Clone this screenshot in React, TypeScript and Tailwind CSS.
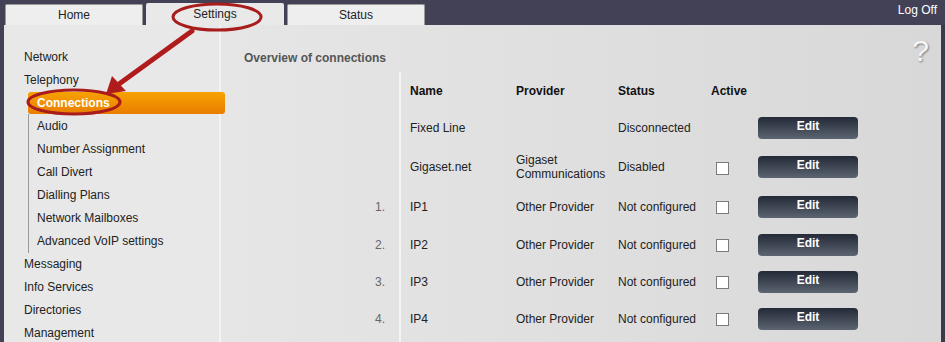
import React from "react";

const menuTop = ["Network", "Telephony"];
const subItems = [
  "Audio",
  "Number Assignment",
  "Call Divert",
  "Dialling Plans",
  "Network Mailboxes",
  "Advanced VoIP settings",
];
const menuBottom = ["Messaging", "Info Services", "Directories", "Management"];

type Row = { num: string; name: string; provider: string[]; status: string; box: boolean; h: string };

const rows: Row[] = [
  { num: "", name: "Fixed Line", provider: [], status: "Disconnected", box: false, h: "h-[38px]" },
  { num: "", name: "Gigaset.net", provider: ["Gigaset", "Communications"], status: "Disabled", box: true, h: "h-[40px]" },
  { num: "1.", name: "IP1", provider: ["Other Provider"], status: "Not configured", box: true, h: "h-[39px]" },
  { num: "2.", name: "IP2", provider: ["Other Provider"], status: "Not configured", box: true, h: "h-[37px]" },
  { num: "3.", name: "IP3", provider: ["Other Provider"], status: "Not configured", box: true, h: "h-[37px]" },
  { num: "4.", name: "IP4", provider: ["Other Provider"], status: "Not configured", box: true, h: "h-[37px]" },
];

function Tab({ label, active }: { label: string; active?: boolean }) {
  return (
    <div
      className={
        active
          ? "w-[138px] h-[22px] bg-[#e9e9e9] rounded-t-[2px] flex items-center justify-center text-[12px] text-[#222]"
          : "w-[138px] h-[21px] bg-[#eeeeee] border border-[#9a9a9a] border-b-0 rounded-t-[2px] flex items-center justify-center text-[12px] text-[#222]"
      }
    >
      {label}
    </div>
  );
}

function EditButton() {
  return (
    <div className="w-[100px] h-[22px] rounded-[4px] bg-gradient-to-b from-[#242a37] to-[#5d6572] text-white font-bold text-[12px] flex justify-center pt-[2px] leading-[14px]">
      Edit
    </div>
  );
}

export default function App() {
  return (
    <div
      className="relative w-[945px] h-[342px] overflow-hidden bg-[#434155]"
      style={{ fontFamily: '"Liberation Sans", Arial, sans-serif' }}
    >
      {/* top bar */}
      <div className="h-[25px] flex items-end pl-[5px] gap-[3px] relative">
        <Tab label="Home" />
        <Tab label="Settings" active />
        <Tab label="Status" />
        <div className="absolute right-[8px] top-[1px] text-[12px] text-white">Log Off</div>
      </div>

      {/* main panel */}
      <div className="ml-[4px] mr-[4px] h-[317px] flex">
        {/* sidebar */}
        <div className="w-[215px] bg-[#e8e8e8] pt-[21px] text-[12px] text-[#222] relative z-10">
          {menuTop.map((m) => (
            <div key={m} className="h-[23px] leading-[23px] pl-[20px]">
              {m}
            </div>
          ))}
          <div className="ml-[24px] w-[197px] h-[22px] rounded-[3px] bg-gradient-to-b from-[#f7a200] to-[#e97d00] text-white font-bold leading-[22px] pl-[9px]">
            Connections
          </div>
          <div className="ml-[24px] border-l border-[#9a9a9a] pt-[1px]">
            {subItems.map((s) => (
              <div key={s} className="h-[23px] leading-[23px] pl-[8px]">
                {s}
              </div>
            ))}
          </div>
          {menuBottom.map((m) => (
            <div key={m} className="h-[23px] leading-[23px] pl-[20px]">
              {m}
            </div>
          ))}
        </div>
        <div className="w-[2px] bg-[#f3f3f3]" />

        {/* content */}
        <div className="flex-1 relative bg-gradient-to-r from-[#e6e6e6] to-[#d8d8d8] text-[12px] text-[#222]">
          <div
            className="absolute right-[12px] top-[11px] text-[30px] leading-[30px] text-[#f6f6f6]"
            style={{ textShadow: "1px 1px 2px #7a7a7a" }}
          >
            ?
          </div>
          <div className="pt-[25px] pl-[23px] leading-[16px] font-bold text-[#555]">Overview of connections</div>

          <div className="mt-[6px]">
            <div className="flex h-[37px]">
              <div className="w-[178px]" />
              <div className="flex-1 border-l-2 border-[#f4f4f4] flex items-center font-bold text-[#111]">
                <div className="w-[115px] pl-[9px]">Name</div>
                <div className="w-[102px]">Provider</div>
                <div className="w-[93px]">Status</div>
                <div className="w-[47px]">Active</div>
              </div>
            </div>
            {rows.map((r) => (
              <div key={r.name} className={`flex ${r.h}`}>
                <div className="w-[178px] text-right pr-[14px] text-[#666] flex items-center justify-end">{r.num}</div>
                <div className="flex-1 border-l-2 border-[#f4f4f4] flex items-center">
                  <div className="w-[115px] pl-[9px]">{r.name}</div>
                  <div className="w-[102px] leading-[14px]">
                    {r.provider.map((p) => (
                      <div key={p} className="whitespace-nowrap">
                        {p}
                      </div>
                    ))}
                  </div>
                  <div className="w-[93px]">{r.status}</div>
                  <div className="w-[47px] pl-[5px] pt-[2px]">
                    {r.box && <div className="w-[13px] h-[13px] bg-white border border-[#7a7a7a]" />}
                  </div>
                  <EditButton />
                </div>
              </div>
            ))}
            <div className="flex h-[20px]">
              <div className="w-[178px]" />
              <div className="flex-1 border-l-2 border-[#f4f4f4]" />
            </div>
          </div>
        </div>
      </div>
      <div className="absolute right-0 top-[25px] w-[4px] h-[317px] bg-[#3b3a48]" />

      {/* annotations */}
      <svg className="absolute left-0 top-0 pointer-events-none z-20" width="945" height="342">
        <ellipse cx="217" cy="17" rx="44" ry="13" fill="none" stroke="#a81c1c" strokeWidth="3" />
        <ellipse cx="74" cy="102" rx="46" ry="12" fill="none" stroke="#a81c1c" strokeWidth="3" />
        <line x1="192" y1="31" x2="119" y2="84" stroke="#b01c1c" strokeWidth="5" strokeLinecap="round" />
        <polygon points="106,94 112,76 126,91" fill="#b01c1c" />
      </svg>
    </div>
  );
}
